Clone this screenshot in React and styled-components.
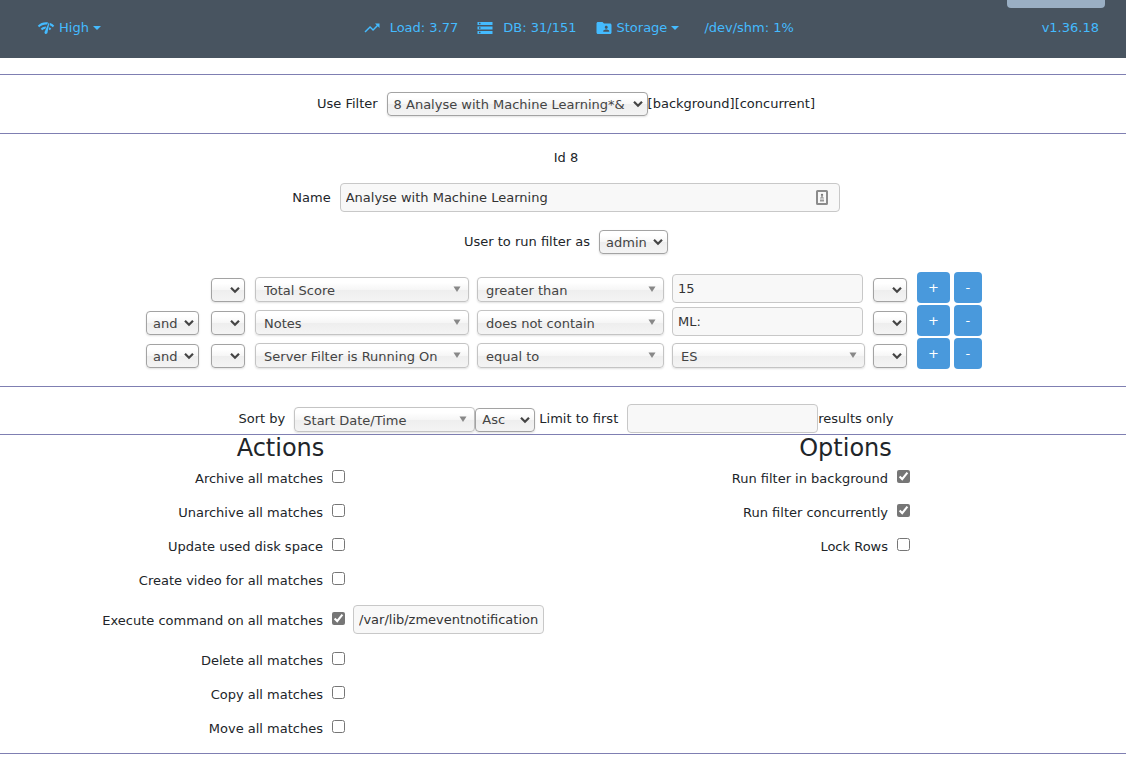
import React from 'react';
import styled, { createGlobalStyle } from 'styled-components';
import { MdNetworkCheck, MdTrendingUp, MdStorage, MdFolderShared } from 'react-icons/md';

const GlobalStyle = createGlobalStyle`
  * {
    box-sizing: border-box;
  }
  body {
    margin: 0;
    background: #fff;
    color: #212529;
    font-family: Verdana, 'DejaVu Sans', sans-serif;
    font-size: 13px;
    line-height: 14px;
  }
  input, select, button {
    font: inherit;
    margin: 0;
  }
`;

const Header = styled.header`
  background: #485460;
  padding: 0 21px 10px;
  margin-bottom: 16px;
`;
const TabRow = styled.div`
  display: flex;
  justify-content: flex-end;
`;
const FlipTab = styled.button`
  width: 98px;
  height: 8px;
  padding: 0;
  border: 0;
  border-radius: 0 0 4px 4px;
  background: #9aafc4;
`;
const Nav = styled.nav`
  display: flex;
  align-items: center;
  justify-content: space-between;
  height: 40px;
  padding: 0 6px 0 16px;
`;
const Stats = styled.div`
  display: flex;
  gap: 18px;
  padding-left: 14px;
`;
const NavLink = styled.a`
  display: flex;
  align-items: center;
  gap: ${props => (props.$menu ? '4px' : '9px')};
  padding-right: ${props => (props.$last || !props.$menu ? '0' : '7px')};
  color: #44bbff;
  text-decoration: none;
  svg {
    font-size: 18px;
  }
`;
const Caret = styled.span`
  border: 4px solid transparent;
  border-top-color: #44bbff;
  border-bottom: 0;
`;

const Section = styled.section`
  display: flex;
  flex-direction: column;
  align-items: center;
  gap: 18px;
  padding: ${props => (props.$tight ? '17px 0 1px 6px' : '17px 0 17px 6px')};
  border-top: 1px solid #7f7fb2;
`;
const Line = styled.div`
  display: flex;
  align-items: center;
`;
const Label = styled.label`
  margin-right: 9px;
`;
const AfterLabel = styled(Label)`
  margin-left: 4px;
`;

const TextInput = styled.input`
  width: ${props => props.$width || '191px'};
  height: 29px;
  padding: 0 5px;
  border: 1px solid #c8c8c8;
  border-radius: 4px;
  background: #f8f8f8;
  color: #333;
`;
const NameBox = styled.div`
  position: relative;
  svg {
    position: absolute;
    top: 7px;
    right: 12px;
  }
`;

const SelectBox = styled.span`
  position: relative;
  display: block;
  width: ${props => props.$width};
  svg {
    position: absolute;
    top: 8px;
    right: ${props => (props.$wide ? '8px' : '4px')};
    pointer-events: none;
  }
`;
const NativeSelect = styled.select`
  appearance: none;
  display: block;
  width: 100%;
  height: ${props => (props.$wide ? '25px' : '24px')};
  padding: ${props => (props.$wide ? '2px 0 0 8px' : '1px 0 0 6px')};
  border: 1px solid ${props => (props.$wide ? '#c4c4c4' : '#a3a3a3')};
  border-radius: 4px;
  background: linear-gradient(#fff 20%, #f6f6f6 50%, #eee 52%, #f4f4f4 100%);
  box-shadow: 0 1px 2px rgba(0, 0, 0, 0.12);
  color: #444;
`;

const SortLine = styled(Line)`
  ${SelectBox} {
    margin-top: 2px;
  }
`;

const Conditions = styled.div`
  display: flex;
  flex-direction: column;
  gap: 2px;
  padding-right: 4px;
`;
const Condition = styled.div`
  display: grid;
  grid-template-columns: 57px 36px 214px 187px 193px 36px auto;
  column-gap: 8px;
  align-items: end;
  ${SelectBox} {
    margin-bottom: 1px;
  }
`;
const Buttons = styled.div`
  display: flex;
  gap: 4px;
`;
const TermButton = styled.button`
  min-width: 28px;
  height: 31px;
  padding: 0 11px;
  border: 0;
  border-radius: 4px;
  background: #4999dc;
  color: #fff;
`;

const Columns = styled.section`
  display: grid;
  grid-template-columns: 1fr 1fr;
  column-gap: 4px;
  padding-bottom: 7px;
  border-top: 1px solid #7f7fb2;
  border-bottom: 1px solid #7f7fb2;
`;
const Heading = styled.h2`
  margin: 0;
  font-size: 24px;
  font-weight: 400;
  line-height: 27px;
  text-align: center;
`;
const CheckRow = styled.div`
  display: grid;
  grid-template-columns: 323fr 238fr;
  align-items: center;
  height: ${props => (props.$tall ? '46px' : '34px')};
`;
const CheckLabel = styled.label`
  text-align: right;
`;
const CheckField = styled.div`
  display: flex;
  align-items: center;
  gap: 8px;
  padding: 0 0 3px 9px;
`;
const Checkbox = styled.input`
  width: 13px;
  height: 13px;
  accent-color: #767676;
  margin-bottom: 2px;
`;

function Chevron() {
  return (
    <svg width="12" height="8" viewBox="0 0 12 8" fill="none" stroke="#444" strokeWidth="2.2">
      <path d="M2 1.7 6 5.7 10 1.7" />
    </svg>
  );
}

function Triangle() {
  return (
    <svg width="8" height="8" viewBox="0 0 8 8" fill="#888">
      <path d="M0.5 1.5h7L4 7z" />
    </svg>
  );
}

function FillIcon() {
  return (
    <svg width="12" height="15" viewBox="0 0 12 15">
      <rect x="1" y="1" width="10" height="13" rx="0.5" fill="#f8f8f8" stroke="#8c8c8c" strokeWidth="2" />
      <circle cx="6" cy="5" r="1.2" fill="#777" />
      <path d="M5.2 5h1.6v2.5H5.2zM4 7.5h4v1H4zM4 9.5h4v2H4z" fill="#999" />
    </svg>
  );
}

function Select({ id, name, width, wide, value }) {
  return (
    <SelectBox $width={width} $wide={wide}>
      <NativeSelect id={id} aria-label={name} $wide={wide} defaultValue={value}>
        <option value={value}>{value}</option>
      </NativeSelect>
      {wide ? <Triangle /> : <Chevron />}
    </SelectBox>
  );
}

const terms = [
  { attr: 'Total Score', op: 'greater than', val: '15' },
  { cnj: 'and', attr: 'Notes', op: 'does not contain', val: 'ML:' },
  { cnj: 'and', attr: 'Server Filter is Running On', op: 'equal to', server: 'ES' },
];

const actions = [
  { id: 'archive', text: 'Archive all matches' },
  { id: 'unarchive', text: 'Unarchive all matches' },
  { id: 'diskspace', text: 'Update used disk space' },
  { id: 'video', text: 'Create video for all matches' },
  { id: 'execute', text: 'Execute command on all matches', on: true, cmd: '/var/lib/zmeventnotification/bin/zm_detect.py' },
  { id: 'delete', text: 'Delete all matches' },
  { id: 'copy', text: 'Copy all matches' },
  { id: 'move', text: 'Move all matches' },
];

const options = [
  { id: 'background', text: 'Run filter in background', on: true },
  { id: 'concurrent', text: 'Run filter concurrently', on: true },
  { id: 'lockrows', text: 'Lock Rows' },
];

function CheckList({ title, items }) {
  return (
    <div>
      <Heading>{title}</Heading>
      {items.map(item => (
        <CheckRow key={item.id} $tall={item.cmd}>
          <CheckLabel htmlFor={item.id}>{item.text}</CheckLabel>
          <CheckField>
            <Checkbox type="checkbox" id={item.id} defaultChecked={item.on} />
            {item.cmd && <TextInput aria-label="Command" defaultValue={item.cmd} />}
          </CheckField>
        </CheckRow>
      ))}
    </div>
  );
}

function App() {
  return (
    <>
      <GlobalStyle />
      <Header>
        <TabRow>
          <FlipTab aria-label="Toggle header" />
        </TabRow>
        <Nav>
          <NavLink href="#bandwidth" $menu $last><MdNetworkCheck /><span>High</span><Caret /></NavLink>
          <Stats>
            <NavLink href="#load"><MdTrendingUp />Load: 3.77</NavLink>
            <NavLink href="#db"><MdStorage />DB: 31/151</NavLink>
            <NavLink href="#storage" $menu><MdFolderShared /><span>Storage</span><Caret /></NavLink>
            <NavLink href="#shm">/dev/shm: 1%</NavLink>
          </Stats>
          <NavLink href="#version">v1.36.18</NavLink>
        </Nav>
      </Header>
      <main>
        <Section>
          <Line>
            <Label htmlFor="filter">Use Filter</Label>
            <Select id="filter" width="261px" value="8 Analyse with Machine Learning*&amp;" />
            <span>[background][concurrent]</span>
          </Line>
        </Section>
        <Section>
          <div>Id 8</div>
          <Line>
            <Label htmlFor="name">Name</Label>
            <NameBox>
              <TextInput id="name" $width="500px" defaultValue="Analyse with Machine Learning" />
              <FillIcon />
            </NameBox>
          </Line>
          <Line>
            <Label htmlFor="user">User to run filter as</Label>
            <Select id="user" width="69px" value="admin" />
          </Line>
          <Conditions>
            {terms.map(term => (
              <Condition key={term.attr}>
                {term.cnj ? <Select name="Conjunction" width="53px" value={term.cnj} /> : <span />}
                <Select name="Open bracket" width="34px" value="" />
                <Select name="Attribute" width="100%" wide value={term.attr} />
                <Select name="Operator" width="100%" wide value={term.op} />
                {term.server
                  ? <Select name="Value" width="100%" wide value={term.server} />
                  : <TextInput aria-label="Value" defaultValue={term.val} />}
                <Select name="Close bracket" width="34px" value="" />
                <Buttons>
                  <TermButton>+</TermButton>
                  <TermButton>-</TermButton>
                </Buttons>
              </Condition>
            ))}
          </Conditions>
        </Section>
        <Section $tight>
          <SortLine>
            <Label htmlFor="sort">Sort by</Label>
            <Select id="sort" width="181px" wide value="Start Date/Time" />
            <Select name="Sort direction" width="60px" value="Asc" />
            <AfterLabel htmlFor="limit">Limit to first</AfterLabel>
            <TextInput id="limit" />
            <span>results only</span>
          </SortLine>
        </Section>
        <Columns>
          <CheckList title="Actions" items={actions} />
          <CheckList title="Options" items={options} />
        </Columns>
      </main>
    </>
  );
}

export default App;
